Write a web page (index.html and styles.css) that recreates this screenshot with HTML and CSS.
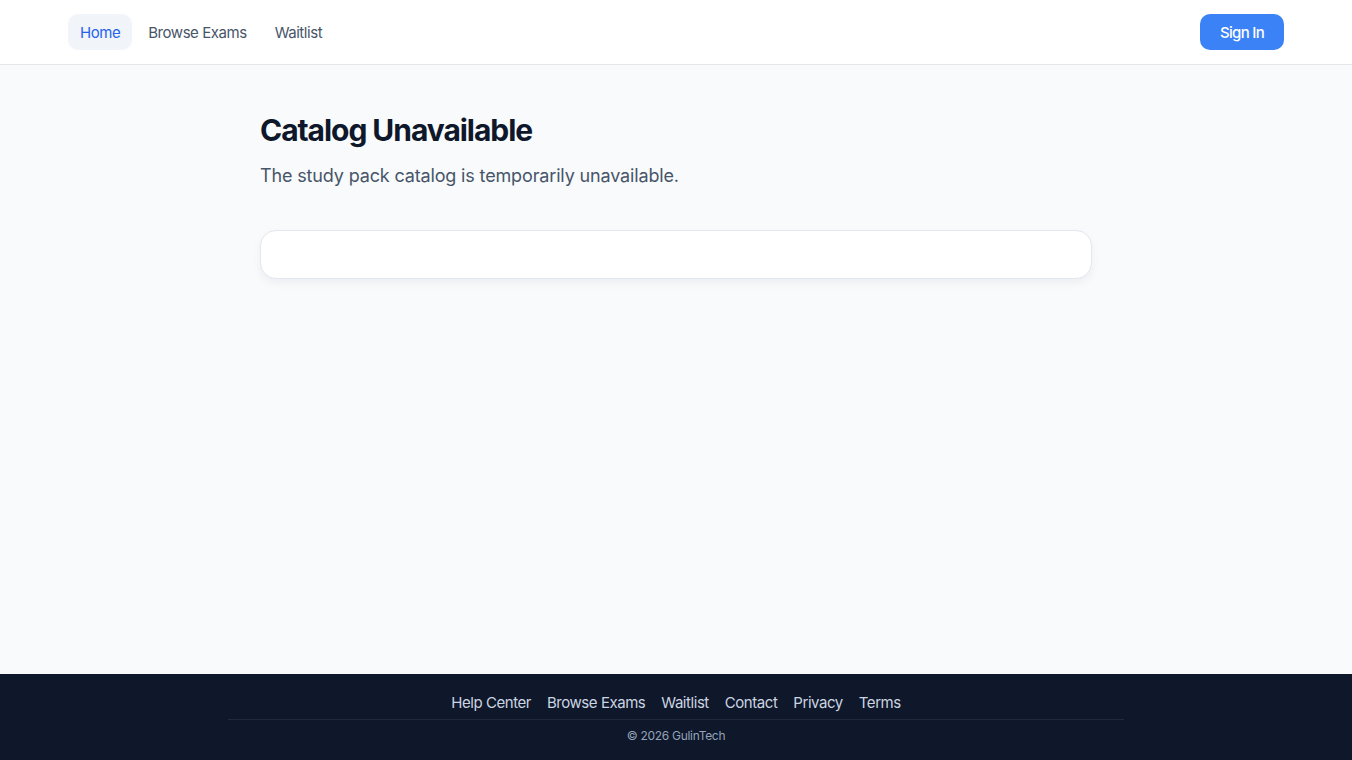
FILE: index.html
```html
<!DOCTYPE html>
<html lang="en">
<head>
  <meta charset="UTF-8" />
  <title>Catalog Unavailable</title>
  <meta name="viewport" content="width=device-width, initial-scale=1.0" />
  <link rel="stylesheet" href="styles.css">
</head>
<body>

  <header class="topbar">
    <div class="topbar-inner">
      <nav class="nav">
        <a href="#" class="nav-link active">Home</a>
        <a href="#" class="nav-link">Browse Exams</a>
        <a href="#" class="nav-link">Waitlist</a>
      </nav>
      <a href="#" class="btn-signin">Sign In</a>
    </div>
  </header>

  <main class="main">
    <div class="container">
      <h1 class="title">Catalog Unavailable</h1>
      <p class="subtitle">The study pack catalog is temporarily unavailable.</p>
      <div class="card"></div>
    </div>
  </main>

  <footer class="footer">
    <div class="footer-inner">
      <nav class="footer-links">
        <a href="#">Help Center</a>
        <a href="#">Browse Exams</a>
        <a href="#">Waitlist</a>
        <a href="#">Contact</a>
        <a href="#">Privacy</a>
        <a href="#">Terms</a>
      </nav>
      <div class="copyright">© 2026 GulinTech</div>
    </div>
  </footer>

</body>
</html>
```

FILE: styles.css
```css
* {
  box-sizing: border-box;
}

body {
  margin: 0;
  min-height: 100vh;
  display: flex;
  flex-direction: column;
  background: #f8fafc;
  font-family: Inter, "Open Sans", sans-serif;
  color: #0f172a;
}

a {
  text-decoration: none;
  color: inherit;
}

/* Header */
.topbar {
  background: #ffffff;
  border-bottom: 1px solid #e5e7eb;
  height: 65px;
}

.topbar-inner {
  max-width: 1216px;
  margin: 0 auto;
  height: 64px;
  display: flex;
  align-items: center;
  justify-content: space-between;
}

.nav {
  display: flex;
  gap: 4px;
}

.nav-link {
  font-size: 15px;
  line-height: 32px;
  padding: 3px 12px 1px;
  border-radius: 10px;
  color: #475569;
  letter-spacing: -0.45px;
}

.nav-link.active {
  background: #f1f5f9;
  color: #2563eb;
}

.btn-signin {
  background: #3b82f6;
  color: #ffffff;
  font-size: 15px;
  font-weight: 500;
  line-height: 32px;
  padding: 3px 20px 1px;
  border-radius: 10px;
  letter-spacing: -0.7px;
}

/* Main */
.main {
  flex: 1;
}

.container {
  max-width: 832px;
  margin: 0 auto;
  padding-top: 47px;
}

.title {
  margin: 0;
  font-size: 30px;
  line-height: 36px;
  font-weight: 700;
  letter-spacing: -1.05px;
  color: #0f172a;
}

.subtitle {
  margin: 14px 0 0;
  font-size: 18px;
  line-height: 28px;
  color: #475569;
  letter-spacing: -0.15px;
}

.card {
  margin-top: 40px;
  height: 49px;
  background: #ffffff;
  border: 1px solid #e2e8f0;
  border-radius: 16px;
  box-shadow: 0 4px 10px rgba(15, 23, 42, 0.05);
}

/* Footer */
.footer {
  background: #0f172a;
  padding: 17px 0 16px;
}

.footer-inner {
  max-width: 896px;
  margin: 0 auto;
}

.footer-links {
  display: flex;
  justify-content: center;
  gap: 16px;
  padding-bottom: 4px;
  border-bottom: 1px solid #1e293b;
}

.footer-links a {
  font-size: 15px;
  line-height: 24px;
  color: #cbd5e1;
  letter-spacing: -0.45px;
}

.copyright {
  margin-top: 8px;
  text-align: center;
  font-size: 12px;
  line-height: 16px;
  color: #94a3b8;
  letter-spacing: -0.3px;
}
```
